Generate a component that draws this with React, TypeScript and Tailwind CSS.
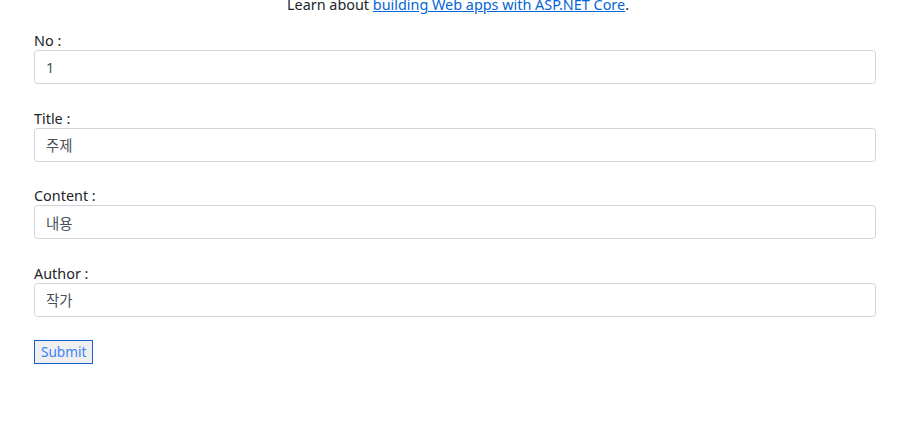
import React from "react";

const fields = [
  { label: "No :", value: "1" },
  { label: "Title :", value: "주제" },
  { label: "Content :", value: "내용" },
  { label: "Author :", value: "작가" },
];

const App = () => {
  return (
    <div
      className="bg-white w-[906px] h-[421px] overflow-hidden text-[#212529] text-[14.4px] leading-[21.6px]"
      style={{ fontFamily: '"Noto Sans", "Noto Sans CJK KR", sans-serif' }}
    >
      <p className="text-center mt-[-6px] h-[21px] pl-[10px]">
        Learn about{" "}
        <a href="#" className="text-[#0366d6] underline">
          building Web apps with ASP.NET Core
        </a>
        .
      </p>
      <form className="pl-[34px] pr-[30px] pt-[16px]">
        {fields.map((f) => (
          <div key={f.label} className="mb-[24.6px]">
            <label className="block leading-[19px]">{f.label}</label>
            <input
              defaultValue={f.value}
              className="block w-full h-[34px] px-[11px] border border-[#ced4da] rounded-[3.6px] text-[#495057] bg-white outline-none"
            />
          </div>
        ))}
        <button
          type="button"
          className="mt-[-2px] h-[24px] px-[6px] border border-[#1a5fd0] bg-[#efefef] text-[#3b82f6] text-[13.6px] leading-[22px]"
        >
          Submit
        </button>
      </form>
    </div>
  );
};

export default App;
